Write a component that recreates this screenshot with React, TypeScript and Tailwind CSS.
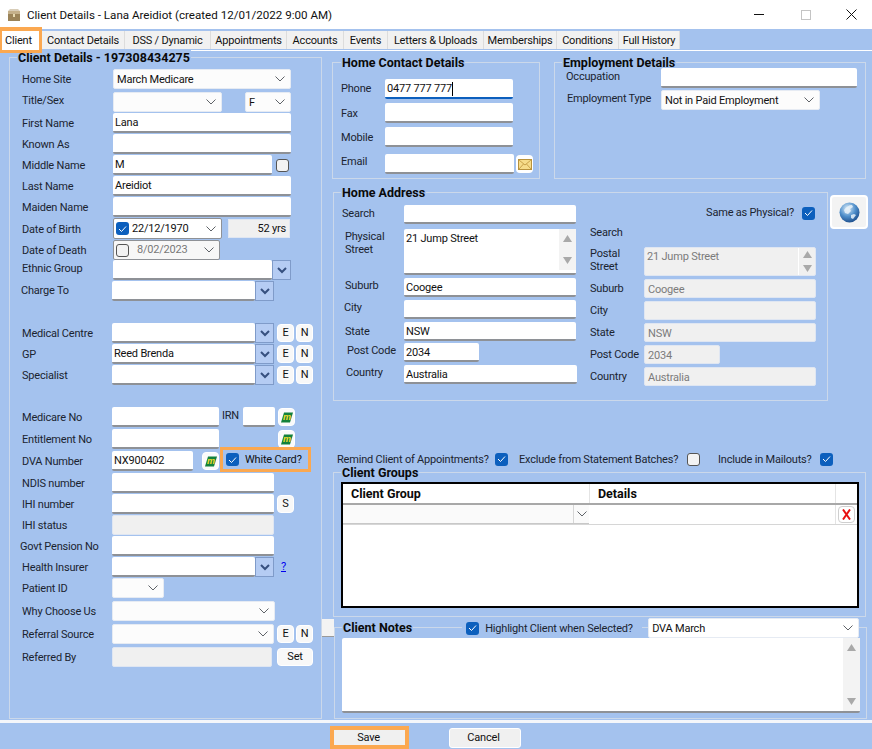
import React from "react";

const Chev = ({ className = "" }: { className?: string }) => (
  <svg width="10" height="6" viewBox="0 0 10 6" className={className} fill="none" stroke="#5f6368" strokeWidth="1">
    <path d="M0.5 0.5l4.5 4.5 4.5-4.5" />
  </svg>
);

const Input = ({ className = "", value = "", disabled = false }: { className?: string; value?: string; disabled?: boolean }) => (
  <div
    className={
      "h-full flex items-center pl-[2px] pt-[2px] rounded-[2px] whitespace-nowrap overflow-hidden " +
      (disabled
        ? "bg-[#f0f0f0] text-[#7b7b7b] border border-[#dfe6f2] pl-[3px] "
        : "bg-white text-[#111] border-b-2 border-[#8e9196] ") +
      className
    }
  >
    {value}
  </div>
);

const Select = ({ className = "", value = "" }: { className?: string; value?: string }) => (
  <div className={"h-full flex items-center justify-between pl-[3px] pr-[5px] bg-[#fcfcfc] border border-[#e6ebf3] rounded-[2px] whitespace-nowrap text-[#111] " + className}>
    <span className="pt-[2px]">{value}</span>
    <Chev />
  </div>
);

const Combo = ({ className = "", value = "" }: { className?: string; value?: string }) => (
  <div className={"h-full flex " + className}>
    <Input className="flex-1" value={value} />
    <div className="w-[19px] h-full bg-[#b5ccf3] border border-[#7f9bc9] flex items-center justify-center">
      <svg width="10" height="7" viewBox="0 0 10 7" fill="none" stroke="#36507f" strokeWidth="2">
        <path d="M1 1l4 4 4-4" />
      </svg>
    </div>
  </div>
);

const Btn = ({ children, className = "" }: { children: React.ReactNode; className?: string }) => (
  <div className={"h-[18px] flex items-center justify-center bg-[#f8f8f8] border border-white rounded-[4px] text-[#111] " + className}>
    {children}
  </div>
);

const EN = () => (
  <>
    <Btn className="w-[17px] ml-[3px]">E</Btn>
    <Btn className="w-[17px] ml-[2px]">N</Btn>
  </>
);

const MBtn = ({ className = "" }: { className?: string }) => (
  <div className={"w-[17px] h-[18px] flex items-center justify-center bg-[#fafafa] border border-white rounded-[4px] " + className}>
    <svg width="12" height="11" viewBox="0 0 12 11">
      <path d="M3 0.5H12L9 10.5H0z" fill="#12813c" />
      <text x="6" y="8.4" textAnchor="middle" fontSize="9" fontWeight="700" fontStyle="italic" fill="#f2dc2c" fontFamily="Liberation Sans, sans-serif">m</text>
    </svg>
  </div>
);

const Check = ({ on = false, className = "" }: { on?: boolean; className?: string }) =>
  on ? (
    <div className={"w-[13px] h-[13px] rounded-[3px] bg-[#0c5fbd] flex items-center justify-center shrink-0 " + className}>
      <svg width="9" height="8" viewBox="0 0 9 8" fill="none" stroke="#fff" strokeWidth="1">
        <path d="M1 4l2.5 2.5L8 1.5" />
      </svg>
    </div>
  ) : (
    <div className={"w-[13px] h-[13px] rounded-[3px] bg-[#f3f3f3] border border-[#555] shrink-0 " + className} />
  );

const Row = ({ label, className = "", labelClass = "", children }: { label: string; className?: string; labelClass?: string; children: React.ReactNode }) => (
  <div className={"flex items-center h-5 text-[#1b2430] " + className}>
    <div className={"whitespace-nowrap pt-[2px] " + labelClass}>{label}</div>
    {children}
  </div>
);

const Legend = ({ children, className = "" }: { children: React.ReactNode; className?: string }) => (
  <div className={"h-4 w-fit px-[1px] bg-[#a4c2ee] font-bold text-[12.5px] tracking-normal text-[#0a0a0a] leading-4 whitespace-nowrap " + className}>{children}</div>
);

const Scroll = ({ className = "" }: { className?: string }) => (
  <div className={"w-[17px] h-full flex flex-col items-center justify-between py-[6px] " + className}>
    <svg width="9" height="7" viewBox="0 0 9 7"><path d="M4.5 0L9 7H0z" fill="#a9a9a9" /></svg>
    <svg width="9" height="7" viewBox="0 0 9 7"><path d="M0 0H9L4.5 7z" fill="#a9a9a9" /></svg>
  </div>
);

const AddrRow = ({ label, className = "", labelClass = "", children }: { label: React.ReactNode; className?: string; labelClass?: string; children: React.ReactNode }) => (
  <div className={"flex items-center h-[19px] text-[#1b2430] " + className}>
    <div className={"whitespace-nowrap " + labelClass}>{label}</div>
    {children}
  </div>
);

const tabs: [string, string][] = [
  ["Contact Details", "w-[83px]"],
  ["DSS / Dynamic", "w-[86px]"],
  ["Appointments", "w-[76px]"],
  ["Accounts", "w-[57px]"],
  ["Events", "w-[44px]"],
  ["Letters & Uploads", "w-[96px]"],
  ["Memberships", "w-[73px]"],
  ["Conditions", "w-[62px]"],
  ["Full History", "w-[61px]"],
];

export default function App() {
  return (
    <div className="w-[872px] h-[749px] overflow-hidden flex flex-col bg-[#a4c2ee] text-[11px] tracking-[-0.2px] leading-[14px] font-['Roboto',sans-serif]">
      {/* title bar */}
      <div className="h-[29px] shrink-0 bg-white flex items-center text-[#111]">
        <svg width="14" height="14" viewBox="0 0 14 14" className="ml-[7px]">
          <path d="M1 3l2-2h8l2 2z" fill="#d8cdb8" />
          <rect x="1" y="3" width="12" height="10" fill="#9a8358" />
          <rect x="1" y="3" width="12" height="3" fill="#c4b08a" />
          <rect x="6" y="6" width="2" height="3" fill="#e6d9b0" />
        </svg>
        <div className="ml-[6px] text-[11.6px] tracking-normal">Client Details - Lana Areidiot (created 12/01/2022 9:00 AM)</div>
        <div className="ml-auto flex items-center">
          <div className="w-[10px] h-[1px] bg-[#111] mr-[37px]" />
          <div className="w-[10px] h-[10px] border border-[#c4c4c4] mr-[35px]" />
          <svg width="11" height="11" viewBox="0 0 11 11" className="mr-[15px]" stroke="#111" strokeWidth="1">
            <path d="M0.5 0.5l10 10M10.5 0.5l-10 10" />
          </svg>
        </div>
      </div>

      {/* tab strip */}
      <div className="h-[22px] shrink-0 flex items-start border-b border-white">
        <div className="w-[42px] h-[26px] -mt-[2px] relative z-10 bg-white border-t-4 border-b-[3px] border-l-2 border-r-[3px] border-[#fba850] pl-[3px] flex items-center text-[#111] leading-none">
          Client
        </div>
        <div className="flex mt-[2px]">
          {tabs.map(([t, w]) => (
            <div key={t} className={"h-[18px] pt-[2px] bg-[#f1f1f1] border-r border-[#dcdcdc] flex items-center justify-center whitespace-nowrap text-[#111] " + w}>
              {t}
            </div>
          ))}
        </div>
      </div>

      {/* body */}
      <div className="flex h-[669px] shrink-0">
        {/* left panel */}
        <div className="ml-[9px] mt-[6px] w-[313px] h-[662px] shrink-0 border border-[#cbd8ea] pl-[12px]">
          <Legend className="-mt-[8px] -ml-[5px]">Client Details - 197308434275</Legend>
          <Row label="Home Site" labelClass="w-[91px]" className="mt-[3px]"><Select className="w-[178px]" value="March Medicare" /></Row>
          <Row label="Title/Sex" labelClass="w-[91px] pb-[5px]" className="mt-[3px]">
            <Select className="w-[109px]" />
            <Select className="w-[46px] ml-[23px]" value="F" />
          </Row>
          <Row label="First Name" labelClass="w-[91px]" className="mt-px"><Input className="w-[178px]" value="Lana" /></Row>
          <Row label="Known As" labelClass="w-[91px]" className="mt-px"><Input className="w-[178px]" /></Row>
          <Row label="Middle Name" labelClass="w-[91px]" className="mt-px">
            <Input className="w-[159px]" value="M" />
            <Check className="ml-[4px]" />
          </Row>
          <Row label="Last Name" labelClass="w-[91px]" className="mt-px"><Input className="w-[178px]" value="Areidiot" /></Row>
          <Row label="Maiden Name" labelClass="w-[91px]" className="mt-px"><Input className="w-[178px]" /></Row>
          <Row label="Date of Birth" labelClass="w-[91px]" className="mt-px h-[21px]">
            <div className="w-[109px] h-full flex items-center bg-white border border-[#8e9196] rounded-[2px] pl-[2px] pr-[5px] text-[#111]">
              <Check on />
              <span className="ml-[3px]">22/12/1970</span>
              <Chev className="ml-auto" />
            </div>
            <div className="w-[62px] ml-[6px] h-[19px] bg-[#f0f0f0] border border-[#dfe6f2] flex items-center justify-end pr-[3px] text-[#111]">52 yrs</div>
          </Row>
          <Row label="Date of Death" labelClass="w-[91px]" className="mt-px">
            <div className="w-[107px] h-full flex items-center bg-[#f7f7f7] border border-[#8e9196] rounded-[2px] pl-[2px] pr-[5px] text-[#777]">
              <Check />
              <span className="ml-[8px]">8/02/2023</span>
              <Chev className="ml-auto" />
            </div>
          </Row>
          <Row label="Ethnic Group" labelClass="w-[91px] pb-[5px]"><Combo className="w-[178px]" /></Row>
          <Row label="Charge To" labelClass="w-[91px] pb-[2px] -ml-[1px] pr-[1px]" className="mt-px"><Combo className="w-[162px]" /></Row>
          <Row label="Medical Centre" labelClass="w-[90px]" className="mt-[22px]"><Combo className="w-[162px]" /><EN /></Row>
          <Row label="GP" labelClass="w-[90px]" className="mt-px"><Combo className="w-[162px]" value="Reed Brenda" /><EN /></Row>
          <Row label="Specialist" labelClass="w-[90px]" className="mt-px"><Combo className="w-[162px]" /><EN /></Row>
          <Row label="Medicare No" labelClass="w-[90px]" className="mt-[22px]">
            <Input className="w-[107px]" />
            <span className="ml-[3px] w-[21px] pb-[2px]">IRN</span>
            <Input className="w-[32px]" />
            <MBtn className="ml-[3px]" />
          </Row>
          <Row label="Entitlement No" labelClass="w-[90px]" className="mt-0.5">
            <Input className="w-[107px]" />
            <MBtn className="ml-[59px]" />
          </Row>
          <Row label="DVA Number" labelClass="w-[90px]" className="mt-0.5">
            <Input className="w-[81px]" value="NX900402" />
            <MBtn className="ml-[9px]" />
            <div className="w-[91px] h-[25px] -mt-[3px] ml-[1px] shrink-0 border-[3px] border-[#fba850] flex items-center pl-[3px] text-[#111]">
              <Check on />
              <span className="ml-[6px] whitespace-nowrap">White Card?</span>
            </div>
          </Row>
          <Row label="NDIS number" labelClass="w-[90px]" className="mt-0.5"><Input className="w-[162px]" /></Row>
          <Row label="IHI number" labelClass="w-[90px]" className="mt-px">
            <Input className="w-[162px]" />
            <Btn className="w-[17px] ml-[3px]">S</Btn>
          </Row>
          <Row label="IHI status" labelClass="w-[90px]" className="mt-px"><Input className="w-[162px]" disabled /></Row>
          <Row label="Govt Pension No" labelClass="w-[90px] -ml-[2px] pr-[2px]" className="mt-px"><Input className="w-[162px] ml-[2px]" /></Row>
          <Row label="Health Insurer" labelClass="w-[90px]" className="mt-px">
            <Combo className="w-[162px]" />
            <span className="ml-[7px] text-[#0000ee] underline">?</span>
          </Row>
          <Row label="Patient ID" labelClass="w-[90px]" className="mt-px"><Select className="w-[52px]" /></Row>
          <Row label="Why Choose Us" labelClass="w-[90px]" className="mt-[3px]"><Select className="w-[163px]" /></Row>
          <Row label="Referral Source" labelClass="w-[90px]" className="mt-[3px]"><Select className="w-[162px]" /><EN /></Row>
          <Row label="Referred By" labelClass="w-[90px]" className="mt-[3px]">
            <Input className="w-[160px]" disabled />
            <Btn className="w-[36px] ml-[5px]">Set</Btn>
          </Row>
        </div>

        {/* right column */}
        <div className="w-[550px] shrink-0 flex flex-col">
          {/* contact + employment */}
          <div className="flex mt-[11px] ml-[10px]">
            <div className="w-[208px] h-[117px] border border-[#cbd8ea] pl-[8px] shrink-0">
              <Legend className="-mt-[8px]">Home Contact Details</Legend>
              <div className="h-5 flex items-center mt-[8px] text-[#1b2430]">
                <div className="w-[44px]">Phone</div>
                <div className="w-[128px] h-full bg-white border-b-2 border-[#0c5fbd] rounded-[2px] flex items-center pl-[2px] pt-[2px] text-[#111]">
                  0477 777 777<span className="w-px h-[14px] bg-black" />
                </div>
              </div>
              <div className="h-5 flex items-center mt-[4px] text-[#1b2430]"><div className="w-[44px] pt-[2px]">Fax</div><Input className="w-[128px]" /></div>
              <div className="h-5 flex items-center mt-[4px] text-[#1b2430]"><div className="w-[44px] pt-[2px]">Mobile</div><Input className="w-[128px]" /></div>
              <div className="h-5 flex items-center mt-[7px] text-[#1b2430]">
                <div className="w-[44px] pb-[4px]">Email</div>
                <Input className="w-[129px]" />
                <div className="w-[17px] h-[18px] ml-[2px] bg-white rounded-[4px] flex items-center justify-center">
                  <svg width="14" height="11" viewBox="0 0 14 11">
                    <rect x="0.5" y="0.5" width="13" height="10" fill="#f6dc8a" stroke="#b8923c" />
                    <path d="M1 1l6 5 6-5M1 10l4.5-5M13 10l-4.5-5" fill="none" stroke="#c9a24a" />
                  </svg>
                </div>
              </div>
            </div>
            <div className="w-[312px] h-[117px] ml-[14px] border border-[#cbd8ea] pl-[11px] shrink-0">
              <Legend className="-mt-[8px] -ml-[4px]">Employment Details</Legend>
              <div className="h-5 flex items-center -mt-[3px] text-[#1b2430]">
                <div className="w-[95px] pb-[2px]">Occupation</div>
                <Input className="w-[196px]" />
              </div>
              <div className="h-5 flex items-center mt-[2px] text-[#1b2430]">
                <div className="w-[95px] pl-px pb-[3px] whitespace-nowrap">Employment Type</div>
                <Select className="w-[159px]" value="Not in Paid Employment" />
              </div>
            </div>
          </div>

          {/* address + globe */}
          <div className="flex mt-[13px] ml-[11px] items-start">
            <div className="w-[495px] h-[209px] border border-[#cbd8ea] shrink-0 pl-[8px]">
              <Legend className="-mt-[8px] -ml-[1px]">Home Address</Legend>
              <div className="flex">
                <div className="w-[235px] shrink-0">
                  <AddrRow label="Search" labelClass="w-[62px] pb-[2px]" className="mt-[4px]"><Input className="w-[172px]" /></AddrRow>
                  <div className="flex mt-[5px] h-[46px] text-[#1b2430]">
                    <div className="w-[62px] pl-[3px] leading-[13px] pt-[1px]">Physical<br />Street</div>
                    <div className="w-[172px] h-full flex bg-white border-b-2 border-[#8e9196] rounded-[2px] pl-[2px] pt-[3px] text-[#111]">
                      <span className="flex-1">21 Jump Street</span>
                      <Scroll className="-mt-[3px] bg-[#f3f3f3] h-[44px]" />
                    </div>
                  </div>
                  <AddrRow label="Suburb" labelClass="w-[62px] pl-[3px] pb-[3px]" className="mt-[3px]"><Input className="w-[172px]" value="Coogee" /></AddrRow>
                  <AddrRow label="City" labelClass="w-[62px] pl-[2px] pb-[3px]" className="mt-[3px]"><Input className="w-[172px]" /></AddrRow>
                  <AddrRow label="State" labelClass="w-[62px] pl-[3px]" className="mt-[3px]"><Input className="w-[172px]" value="NSW" /></AddrRow>
                  <AddrRow label="Post Code" labelClass="w-[62px] pl-[5px] pb-[3px]" className="mt-[2px] h-5"><Input className="w-[75px]" value="2034" /></AddrRow>
                  <AddrRow label="Country" labelClass="w-[62px] pl-[4px] pb-[3px]" className="mt-[3px]"><Input className="w-[173px]" value="Australia" /></AddrRow>
                </div>
                <div className="w-[226px] ml-[13px] shrink-0">
                  <div className="h-[19px] mt-[4px] pb-[3px] flex items-center justify-end text-[#1b2430]">
                    Same as Physical?<Check on className="ml-[8px] mr-[1px]" />
                  </div>
                  <div className="h-[14px] mt-[2px] text-[#1b2430]">Search</div>
                  <div className="flex mt-[7px] h-[29px] text-[#1b2430]">
                    <div className="w-[54px] leading-[13px]">Postal<br />Street</div>
                    <div className="w-[172px] h-full flex bg-[#f0f0f0] border border-[#dfe6f2] rounded-[2px] pl-[2px] text-[#7b7b7b]">
                      <span className="flex-1 pt-[2px]">21 Jump Street</span>
                      <div className="w-[17px] border-l border-white h-full flex flex-col items-center justify-between py-[3px]">
                        <svg width="9" height="7" viewBox="0 0 9 7"><path d="M4.5 0L9 7H0z" fill="#a9a9a9" /></svg>
                        <svg width="9" height="7" viewBox="0 0 9 7"><path d="M0 0H9L4.5 7z" fill="#a9a9a9" /></svg>
                      </div>
                    </div>
                  </div>
                  <AddrRow label="Suburb" labelClass="w-[54px]" className="mt-[3px]"><Input disabled className="w-[172px]" value="Coogee" /></AddrRow>
                  <AddrRow label="City" labelClass="w-[54px]" className="mt-[3px]"><Input disabled className="w-[172px]" /></AddrRow>
                  <AddrRow label="State" labelClass="w-[54px]" className="mt-[3px]"><Input disabled className="w-[172px]" value="NSW" /></AddrRow>
                  <AddrRow label="Post Code" labelClass="w-[54px]" className="mt-[3px] h-5"><Input disabled className="w-[76px]" value="2034" /></AddrRow>
                  <AddrRow label="Country" labelClass="w-[54px]" className="mt-[3px]"><Input disabled className="w-[172px]" value="Australia" /></AddrRow>
                </div>
              </div>
            </div>
            <div className="w-[38px] h-[34px] ml-[2px] mt-[3px] bg-[#f3f3f3] border-2 border-white rounded-[4px] flex items-center justify-center">
              <svg width="21" height="21" viewBox="0 0 21 21">
                <defs>
                  <radialGradient id="g" cx="0.4" cy="0.3" r="0.8">
                    <stop offset="0" stopColor="#dcecf8" />
                    <stop offset="0.5" stopColor="#4f8fcb" />
                    <stop offset="1" stopColor="#123f7d" />
                  </radialGradient>
                </defs>
                <circle cx="10.5" cy="10.5" r="10" fill="url(#g)" />
                <path d="M5 8c2-3 5-5 8-5l1 2-3 2 1 2-3 3-3-1zM12 13l3-1 2 1-3 4-2-1z" fill="#e9f2f9" opacity="0.85" />
              </svg>
            </div>
          </div>

          {/* checks */}
          <div className="flex items-center h-4 mt-[50px] ml-[15px] text-[#1b2430] whitespace-nowrap">
            <span className="w-[150px] pt-[1px]">Remind Client of Appointments?</span>
            <Check on className="ml-[8px]" />
            <span className="ml-[11px] w-[160px] pt-[1px]">Exclude from Statement Batches?</span>
            <Check className="ml-[8px]" />
            <span className="ml-[18px] w-[94px] pt-[1px]">Include in Mailouts?</span>
            <Check on className="ml-[8px]" />
          </div>

          {/* client groups */}
          <div className="w-[533px] h-[145px] mt-[5px] ml-[11px] border border-[#cbd8ea] shrink-0 pl-[7px]">
            <Legend className="-mt-[8px]">Client Groups</Legend>
            <div className="w-[518px] h-[126px] mt-px bg-white border-2 border-black">
              <div className="flex h-[21px] border-b-2 border-[#a8a8a8] font-bold text-[12.5px] tracking-normal text-[#0a0a0a] leading-[20px]">
                <div className="w-[247px] pl-[8px] border-r border-[#e4e4e4]">Client Group</div>
                <div className="w-[246px] pl-[8px] border-r border-[#e4e4e4]">Details</div>
                <div className="flex-1" />
              </div>
              <div className="flex h-[20px] border-b border-[#d6d6d6]">
                <div className="w-[246px] h-full mr-px flex bg-[#fafafa] border-b border-[#c8c8c8] items-center justify-end">
                  <div className="w-[16px] h-full border-l border-[#d6d6d6] flex items-center justify-center"><Chev /></div>
                </div>
                <div className="w-[246px] border-r border-[#e4e4e4]" />
                <div className="flex-1 flex items-center justify-center">
                  <div className="w-[17px] h-[17px] bg-white border border-[#cfcfcf] rounded-[4px] flex items-center justify-center">
                    <svg width="9" height="11" viewBox="0 0 9 11" stroke="#e81010" strokeWidth="2" fill="none"><path d="M1 0.5l7 10M8 0.5l-7 10" /></svg>
                  </div>
                </div>
              </div>
            </div>
          </div>

          {/* client notes */}
          <div className="flex items-start mt-[10px] shrink-0">
            <div className="w-[12px] h-[18px] -mt-[8px] bg-[#f3f3f3] border-b border-[#9a9a9a] shrink-0" />
            <div className="w-[533px] h-[92px] border border-[#cbd8ea] shrink-0 pl-[7px]">
              <div className="flex items-center h-5 -mt-[10px] w-[526px]">
                <Legend>Client Notes</Legend>
                <div className="w-[180px] h-full ml-[49px] bg-[#a4c2ee] flex items-center pl-[4px] text-[#1b2430] whitespace-nowrap">
                  <Check on />
                  <span className="ml-[6px] pt-[1px]">Highlight Client when Selected?</span>
                </div>
                <Select className="w-[211px] ml-[6px] bg-white" value="DVA March" />
              </div>
              <div className="w-[518px] h-[75px] bg-white border-b-2 border-[#8e9196] rounded-[2px] flex justify-end">
                <Scroll className="bg-[#f3f3f3] h-[73px]" />
              </div>
            </div>
          </div>
        </div>
      </div>

      {/* footer */}
      <div className="h-[3px] shrink-0 bg-[#f4f6fa]" />
      <div className="flex items-start shrink-0 text-[#111]">
        <div className="w-[79px] h-[23px] ml-[330px] mt-[3px] border-[4px] border-[#fba850] bg-[#f0f0f0] pr-[2px] flex items-center justify-center">Save</div>
        <div className="w-[72px] h-[20px] ml-[40px] mt-[5px] border border-white rounded-[3px] bg-[#f0f0f0] pr-[3px] flex items-center justify-center">Cancel</div>
      </div>
    </div>
  );
}
